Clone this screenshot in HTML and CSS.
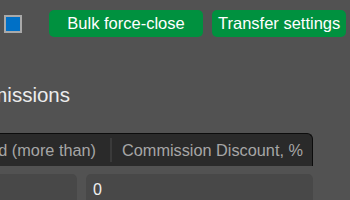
FILE: index.html
```html
<!DOCTYPE html>
<html lang="en">
<head>
    <meta charset="UTF-8">
    <meta name="viewport" content="width=device-width, initial-scale=1.0">
    <title>Commissions</title>
    <link rel="stylesheet" href="styles.css">
</head>
<body>
    <div class="toolbar">
        <span class="check"></span>
        <button class="btn btn-wide">Bulk force-close</button>
        <button class="btn">Transfer settings</button>
    </div>

    <div class="section">
        <h2>Commissions</h2>
        <div class="thead">
            <div class="th th-first">Volume traded (more than)</div>
            <div class="th">Commission Discount, %</div>
        </div>
        <div class="row">
            <input class="field field-first" type="text" value="">
            <input class="field" type="text" value="0">
        </div>
    </div>
</body>
</html>
```

FILE: styles.css
```css
body {
    margin: 0;
    height: 200px;
    overflow: hidden;
    background-color: #525252;
    font-family: "Liberation Sans", Arial, sans-serif;
    color: #e8e8e8;
}
.toolbar {
    display: flex;
    align-items: center;
    gap: 9px;
    padding: 10px 0 0 4px;
}
.check {
    box-sizing: border-box;
    width: 18px;
    height: 18px;
    border: 2px solid #a9a9a9;
    background-color: #0070c6;
    margin-right: 18px;
}
.btn {
    height: 27px;
    padding: 0 6px;
    border: none;
    border-radius: 5px;
    background-color: #00913f;
    color: #fff;
    font-family: inherit;
    font-size: 16.5px;
    white-space: nowrap;
    cursor: pointer;
}
.btn-wide {
    width: 154px;
}
.section {
    margin-left: -160px;
    width: 473px;
}
h2 {
    margin: 46px 0 26px;
    padding-left: 107px;
    font-size: 20.5px;
    font-weight: normal;
    line-height: 24px;
    color: #ececec;
}
.thead {
    display: flex;
    padding: 4px 0;
    background-color: #2a2a2a;
    border-top: 1px solid #0c0c0c;
    border-right: 1px solid #0c0c0c;
    border-radius: 0 6px 0 0;
}
.th {
    flex: 1;
    padding-left: 10px;
    line-height: 24px;
    font-size: 16.3px;
    color: #a6a6a6;
    white-space: nowrap;
    border-left: 2px solid #3a3a3a;
}
.th-first {
    flex: none;
    box-sizing: border-box;
    width: 270px;
    padding: 0 14px 0 0;
    text-align: right;
    border-left: none;
}
.row {
    display: flex;
    gap: 9px;
    margin-top: 8px;
}
.field {
    flex: 1;
    min-width: 0;
    box-sizing: border-box;
    height: 32px;
    padding: 0 7px;
    border: none;
    border-radius: 5px;
    background-color: #484848;
    color: #f0f0f0;
    font-family: inherit;
    font-size: 16px;
}
.field-first {
    flex: none;
    width: 237px;
}
```
